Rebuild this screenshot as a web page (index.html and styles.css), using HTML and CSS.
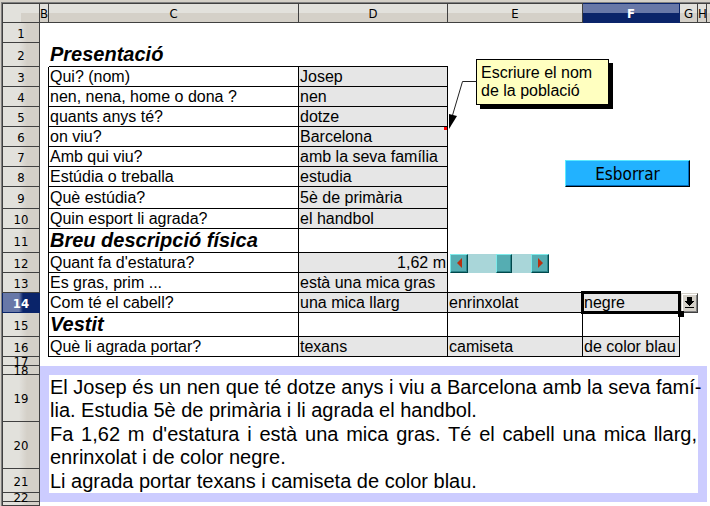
FILE: index.html
```html
<!DOCTYPE html>
<html lang="ca">
<head>
<meta charset="utf-8">
<title>Presentació</title>
<link rel="stylesheet" href="styles.css">
</head>
<body>
<main class="sheet">
<table class="grid">
  <colgroup>
    <col class="w-head"><col class="w-b"><col class="w-c"><col class="w-d"><col class="w-e"><col class="w-f"><col class="w-g"><col class="w-h"><col>
  </colgroup>
  <thead>
    <tr>
      <th class="corner"></th>
      <th scope="col">B</th><th scope="col">C</th><th scope="col">D</th><th scope="col">E</th>
      <th scope="col" class="current">F</th><th scope="col">G</th><th scope="col">H</th><th></th>
    </tr>
  </thead>
  <tbody>
    <tr class="row"><th scope="row">1</th><td colspan="8"></td></tr>
    <tr class="row-tall"><th scope="row">2</th><td></td><td class="title under">Presentació</td><td class="under"></td><td colspan="5"></td></tr>
    <tr class="row"><th scope="row">3</th><td class="edge"></td><td class="cell">Qui? (nom)</td><td class="cell fill">Josep</td><td colspan="5"></td></tr>
    <tr class="row"><th scope="row">4</th><td class="edge"></td><td class="cell">nen, nena, home o dona ?</td><td class="cell fill">nen</td><td colspan="5"></td></tr>
    <tr class="row"><th scope="row">5</th><td class="edge"></td><td class="cell">quants anys té?</td><td class="cell fill">dotze</td><td colspan="5"></td></tr>
    <tr class="row"><th scope="row">6</th><td class="edge"></td><td class="cell">on viu?</td>
      <td class="cell fill anchor">Barcelona
        <span class="note-mark"></span>
        <svg class="note-arrow" width="30" height="52" viewBox="0 0 30 52" aria-hidden="true">
          <path d="M29.500 2.500H15.500L5 38" fill="none" stroke="#222"/>
          <path d="M2 50V35L10 37Z"/>
        </svg>
        <aside class="note">Escriure el nom de la població</aside>
      </td><td colspan="5"></td></tr>
    <tr class="row"><th scope="row">7</th><td class="edge"></td><td class="cell">Amb qui viu?</td><td class="cell fill">amb la seva família</td><td></td>
      <td class="anchor"><button class="clear" type="button">Esborrar</button></td><td colspan="3"></td></tr>
    <tr class="row"><th scope="row">8</th><td class="edge"></td><td class="cell">Estúdia o treballa</td><td class="cell fill">estudia</td><td colspan="5"></td></tr>
    <tr class="row-mid"><th scope="row">9</th><td class="edge"></td><td class="cell">Què estúdia?</td><td class="cell fill">5è de primària</td><td colspan="5"></td></tr>
    <tr class="row"><th scope="row">10</th><td class="edge"></td><td class="cell">Quin esport li agrada?</td><td class="cell fill">el handbol</td><td colspan="5"></td></tr>
    <tr class="row-tall"><th scope="row">11</th><td class="edge"></td><td class="cell title">Breu descripció física</td><td class="cell"></td><td colspan="5"></td></tr>
    <tr class="row"><th scope="row">12</th><td class="edge"></td><td class="cell">Quant fa d'estatura?</td><td class="cell fill number">1,62 m</td>
      <td>
        <div class="scroller">
          <button class="step" type="button" aria-label="Menys"><svg width="5" height="10" viewBox="0 0 5 10"><path d="M5 0V10L0 5Z"/></svg></button>
          <input class="track" type="range" min="0" max="100" value="60" aria-label="Estatura">
          <button class="step" type="button" aria-label="Més"><svg width="5" height="10" viewBox="0 0 5 10"><path d="M0 0V10L5 5Z"/></svg></button>
        </div>
      </td><td colspan="4"></td></tr>
    <tr class="row"><th scope="row">13</th><td class="edge"></td><td class="cell">Es gras, prim ...</td><td class="cell fill">està una mica gras</td><td class="under"></td><td class="under"></td><td colspan="3"></td></tr>
    <tr class="row"><th scope="row" class="current">14</th><td class="edge"></td><td class="cell">Com té el cabell?</td><td class="cell fill">una mica llarg</td><td class="cell fill">enrinxolat</td>
      <td class="cell fill anchor selected"><select class="choice" aria-label="Color del cabell"><option>negre</option></select></td>
      <td class="anchor"><button class="drop" type="button" aria-label="Obre la llista"><svg width="9" height="12" viewBox="0 0 9 12" shape-rendering="crispEdges"><path d="M2 0H7V4H9V5H8V6H7V7H6V8H5V9H4V8H3V7H2V6H1V5H0V4H2ZM0 10H9V11H0Z"/></svg></button></td><td colspan="2"></td></tr>
    <tr class="row-tall"><th scope="row">15</th><td class="edge"></td><td class="cell title">Vestit</td><td class="cell"></td><td class="cell"></td><td class="cell"></td><td colspan="3"></td></tr>
    <tr class="row"><th scope="row">16</th><td class="edge"></td><td class="cell">Què li agrada portar?</td><td class="cell fill">texans</td><td class="cell fill">camiseta</td><td class="cell fill">de color blau</td><td colspan="3"></td></tr>
    <tr class="row-thin"><th scope="row">17</th><td colspan="8"></td></tr>
    <tr class="row-thin"><th scope="row">18</th><td class="frame" colspan="7"></td><td></td></tr>
    <tr class="row-text"><th scope="row">19</th><td class="frame"></td><td class="story fixed-lines" colspan="5">El Josep és un nen que té dotze anys i viu a Barcelona amb la seva famí-<br>lia. Estudia 5è de primària i li agrada el handbol.</td><td class="frame"></td><td></td></tr>
    <tr class="row-text"><th scope="row">20</th><td class="frame"></td><td class="story" colspan="5">Fa 1,62 m d'estatura i està una mica gras. Té el cabell una mica llarg, enrinxolat i de color negre.</td><td class="frame"></td><td></td></tr>
    <tr class="row-tall"><th scope="row">21</th><td class="frame"></td><td class="story" colspan="5">Li agrada portar texans i camiseta de color blau.</td><td class="frame"></td><td></td></tr>
    <tr class="row-thin"><th scope="row">22</th><td class="frame" colspan="7"></td><td></td></tr>
    <tr class="row-last"><th></th><td colspan="8"></td></tr>
  </tbody>
</table>
</main>
</body>
</html>
```
FILE: styles.css
```css
* { box-sizing: border-box; }

body {
  margin: 0;
  padding: 2px 0 0 1px;
  background: #d4d0c8;
  color: #000;
  font-family: "Liberation Sans", Arial, sans-serif;
  font-size: 16px;
  line-height: 18px;
}

.sheet {
  border-top: 1px solid #808080;
  border-left: 1px solid #808080;
  background: #fff;
  overflow: hidden;
}

.grid {
  width: 100%;
  table-layout: fixed;
  border-collapse: separate;
  border-spacing: 0;
}

.w-head { width: 38px; }
.w-b, .w-h { width: 9px; }
.w-c { width: 250px; }
.w-d { width: 149px; }
.w-e { width: 135px; }
.w-f { width: 97px; }
.w-g { width: 18px; }

th, td { padding: 0; white-space: nowrap; vertical-align: middle; }

/* Headers */
th {
  padding-top: 2px;
  font-family: "DejaVu Sans Condensed", "DejaVu Sans", sans-serif;
  font-size: 13px;
  font-weight: normal;
  line-height: 6px;
  text-align: center;
  border-right: 1px solid #404040;
  border-bottom: 1px solid #404040;
}

thead th {
  height: 20px;
  border-top: 1px solid #404040;
  background: linear-gradient(#e2e1dc 9px, #d4d0c8 9px);
}

thead th:last-child { border-right: 0; }

tbody th {
  border-left: 1px solid #404040;
  background: linear-gradient(to right, #e2e1dc 16px, #d4d0c8 24px);
}

thead .corner {
  border-left: 1px solid #404040;
  background: linear-gradient(#d4d0c8, #d4d0c8) 18px 9px no-repeat #e2e1dc;
}

th.current { color: #fff; font-weight: bold; border-color: #0a246a; }
thead .current { background: linear-gradient(#6878a8 9px, #0a246a 9px); }
tbody .current { background: linear-gradient(to right, #6878a8 16px, #0a246a 20px); }

/* Row heights */
.row { height: 20px; }
.row-mid { height: 22px; }
.row-tall { height: 24px; }
.row-thin { height: 9px; }
.row-text { height: 47px; }
.row-last { height: 4px; }
.row-last th { padding: 0; line-height: 0; }

/* Cells */
.cell { border-right: 1px solid #000; border-bottom: 1px solid #000; }
.edge { border-right: 1px solid #000; }
.under { border-bottom: 1px solid #000; }
.cell, .title { padding: 0 1px; }
.fill { background: #e6e6e6; }
.number { text-align: right; }
.anchor { position: relative; }

.title {
  font-size: 20px;
  font-weight: bold;
  font-style: italic;
  line-height: 22px;
  vertical-align: top;
}

.frame { background: #ccccff; }

.story {
  padding: 0 1px;
  font-size: 20px;
  line-height: 23px;
  text-align: justify;
  white-space: normal;
  vertical-align: bottom;
}

.fixed-lines { white-space: nowrap; }

/* Comment on the town cell */
.note-mark {
  position: absolute;
  top: 0;
  right: 0;
  width: 3px;
  height: 3px;
  background: #f00;
}

.note-arrow { position: absolute; left: 100%; top: -48px; z-index: 1; }

.note {
  position: absolute;
  left: calc(100% + 29px);
  top: -68px;
  width: 133px;
  padding: 4px;
  border: 1px solid #000;
  background: #ffffc0;
  box-shadow: 4px 4px #000;
  white-space: normal;
}

/* Floating button */
.clear {
  position: absolute;
  left: -18px;
  top: 13px;
  width: 125px;
  height: 27px;
  padding: 0;
  border: 1px solid;
  border-color: #5ceaff #000 #000 #5ceaff;
  background: #22b2ff;
  box-shadow: inset -1px -1px #0068b8;
  color: #000;
  font-family: "DejaVu Sans Condensed", "DejaVu Sans", sans-serif;
  font-size: 17px;
}

/* Height scroll bar */
.scroller {
  display: flex;
  width: 99px;
  height: 19px;
  margin-left: 2px;
  background: #a9d6d9;
}

.step {
  display: flex;
  align-items: center;
  justify-content: center;
  width: 18px;
  padding: 0;
  border: 1px solid;
  border-color: #7deaea #00484c #00484c #7deaea;
  background: #55adb2;
  box-shadow: inset -1px -1px #2c8489;
  fill: #b83010;
}

.track {
  appearance: none;
  flex: 1;
  min-width: 0;
  height: 19px;
  margin: 0;
  background: #a9d6d9;
}

.track::-webkit-slider-thumb {
  appearance: none;
  width: 16px;
  height: 19px;
  border: 1px solid;
  border-color: #7deaea #00484c #00484c #7deaea;
  background: #55adb2;
  box-shadow: inset -1px -1px #2c8489;
}

/* Selected cell */
.selected::before {
  content: "";
  position: absolute;
  inset: -2px;
  border: 3px solid #000;
  pointer-events: none;
}

.selected::after {
  content: "";
  position: absolute;
  right: -5px;
  bottom: -5px;
  width: 6px;
  height: 6px;
  background: #000;
  z-index: 1;
}

.choice {
  appearance: none;
  display: block;
  width: 100%;
  padding: 0;
  border: 0;
  background: transparent;
  color: #000;
  font: inherit;
}

.drop {
  position: absolute;
  left: 1px;
  top: 0;
  display: flex;
  align-items: center;
  justify-content: center;
  width: 17px;
  height: 20px;
  padding: 0;
  border: 1px solid;
  border-color: #d4d0c8 #404040 #404040 #d4d0c8;
  background: #d4d0c8;
  box-shadow: inset 1px 1px #fff, inset -1px -1px #808080;
}
```
